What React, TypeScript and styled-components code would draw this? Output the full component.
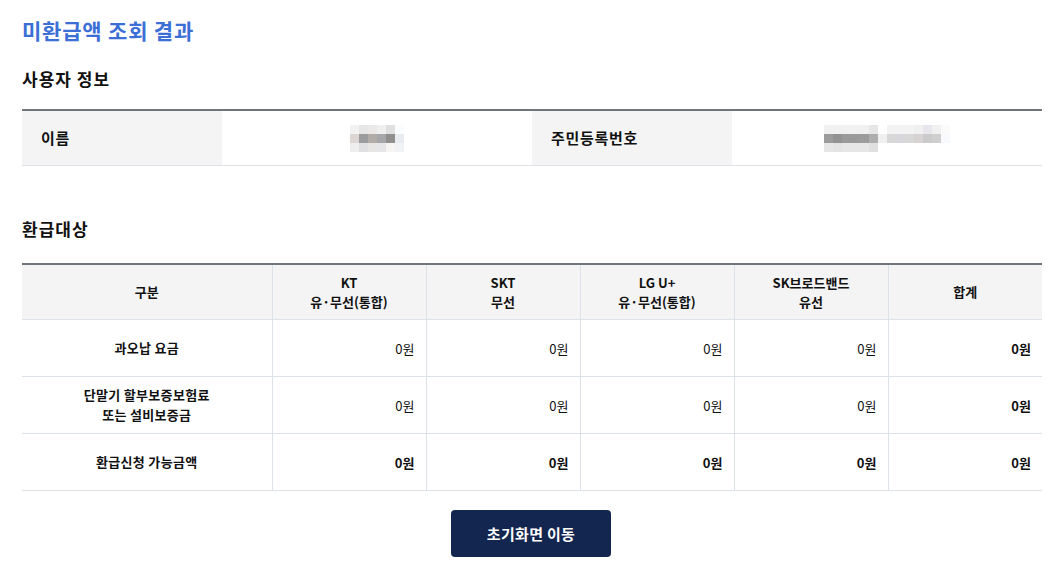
import React from "react";
import styled, { createGlobalStyle } from "styled-components";

const GlobalStyle = createGlobalStyle`
  html, body { margin: 0; padding: 0; background: #ffffff; }
  body {
    font-family: "Noto Sans CJK KR", "Noto Sans", sans-serif;
    color: #111111;
    -webkit-font-smoothing: antialiased;
  }
  * { box-sizing: border-box; }
`;

const Page = styled.div`
  width: 1060px;
  padding: 16px 18px 0 22px;
  display: flex;
  flex-direction: column;
`;

const Title = styled.h1`
  margin: 0;
  font-size: 21px;
  line-height: 28px;
  font-weight: 700;
  color: #3c6fd6;
  letter-spacing: 0.8px;
`;

const SectionTitle = styled.h2<{ $top: number }>`
  margin: ${(p) => p.$top}px 0 0;
  font-size: 17px;
  line-height: 24px;
  font-weight: 700;
  color: #111111;
  letter-spacing: 1px;
`;

const InfoTable = styled.table`
  margin-top: 18px;
  width: 1020px;
  border-collapse: collapse;
  table-layout: fixed;
  border-top: 2px solid #6f757b;
`;

const InfoRow = styled.tr`
  height: 55px;
  border-bottom: 1px solid #dde2e8;
`;

const InfoLabel = styled.th`
  background: #f4f4f4;
  text-align: left;
  padding: 0 19px;
  font-size: 15px;
  font-weight: 700;
  letter-spacing: 0.7px;
  color: #111111;
`;

const InfoValue = styled.td`
  text-align: center;
  padding: 0;
  vertical-align: middle;
`;

const RefundTable = styled.table`
  margin-top: 22px;
  width: 1020px;
  border-collapse: collapse;
  table-layout: fixed;
  border-top: 2px solid #6f757b;
  font-size: 13px;
`;

const Row = styled.tr<{ $head?: boolean }>`
  height: ${(p) => (p.$head ? 56 : 57)}px;
  border-bottom: 1px solid #dde2e8;
  background: ${(p) => (p.$head ? "#f4f4f4" : "#ffffff")};
`;

const HeadCell = styled.th`
  font-weight: 700;
  line-height: 19px;
  text-align: center;
  padding: 0 6px;
  color: #111111;
  & + & { border-left: 1px solid #dde2e8; }
`;

const LabelCell = styled.th`
  font-weight: 700;
  line-height: 20px;
  text-align: center;
  padding: 0 8px;
  letter-spacing: 0.3px;
  color: #111111;
`;

const AmountCell = styled.td<{ $bold?: boolean }>`
  text-align: right;
  padding: 0 11px;
  font-weight: ${(p) => (p.$bold ? 700 : 400)};
  border-left: 1px solid #dde2e8;
  color: #111111;
`;

const ButtonRow = styled.div`
  display: flex;
  justify-content: center;
  padding-top: 19px;
  padding-right: 2px;
`;

const HomeButton = styled.button`
  width: 160px;
  height: 47px;
  border: none;
  border-radius: 4px;
  background: #12264f;
  color: #ffffff;
  font-family: "Noto Sans CJK KR", "Noto Sans", sans-serif;
  font-size: 15px;
  font-weight: 700;
  letter-spacing: 0.3px;
  padding: 0;
  cursor: pointer;
`;

const MosaicSvg = styled.svg`
  display: inline-block;
  vertical-align: middle;
`;

const Mosaic: React.FC<{ rows: string[][]; cell?: number }> = ({ rows, cell = 9 }) => {
  const cols = Math.max(...rows.map((r) => r.length));
  return (
    <MosaicSvg width={cols * cell} height={rows.length * cell} viewBox={`0 0 ${cols * cell} ${rows.length * cell}`}>
      {rows.map((r, y) =>
        r.map((c, x) => <rect key={`${x}-${y}`} x={x * cell} y={y * cell} width={cell} height={cell} fill={c} />)
      )}
    </MosaicSvg>
  );
};

const nameMosaic = [
  ["#f2f2f2", "#e6e6e6", "#ebe9e8", "#efefef", "#e0e0e0", "#fbfcfd"],
  ["#ddd7d4", "#9a9c9d", "#b2aca9", "#a6a7ab", "#918f8e", "#e8ebf0"],
  ["#eeeeee", "#e0e0e2", "#e8e6e5", "#e6e6e8", "#f7f5f3", "#f0f2f5"],
];

const idMosaic = [
  ["#f1f1f1", "#f1f1f1", "#f1f1f1", "#f1f1f1", "#f1f1f1", "#e6e6e6", "#ffffff", "#f3f3f3", "#f3f3f3", "#f3f3f3", "#f0f0f0", "#e8e6ec", "#f0f0f0", "#fbfbfb"],
  ["#9c9c9c", "#929292", "#9a9a9a", "#9a9a9a", "#9c9c9c", "#aeaeae", "#f0f0f0", "#d8d8d8", "#d8d8dc", "#d8d8d8", "#d6d3d2", "#cbcbcb", "#cfcfcf", "#f8f9fc"],
  ["#e6e6e6", "#e3e3e3", "#e6e6e6", "#e6e6e6", "#e6e6e6", "#e0e0e0", "#ffffff", "#ffffff", "#ffffff", "#ffffff", "#ffffff", "#ffffff", "#ffffff", "#ffffff"],
];

const carriers = [
  ["KT", "유·무선(통합)"],
  ["SKT", "무선"],
  ["LG U+", "유·무선(통합)"],
  ["SK브로드밴드", "유선"],
];

const rows: { label: string[]; bold: boolean }[] = [
  { label: ["과오납 요금"], bold: false },
  { label: ["단말기 할부보증보험료", "또는 설비보증금"], bold: false },
  { label: ["환급신청 가능금액"], bold: true },
];

export default function App() {
  return (
    <>
      <GlobalStyle />
      <Page>
        <Title>미환급액 조회 결과</Title>
        <SectionTitle $top={23}>사용자 정보</SectionTitle>
        <InfoTable>
          <colgroup>
            <col style={{ width: 200 }} />
            <col style={{ width: 310 }} />
            <col style={{ width: 200 }} />
            <col style={{ width: 310 }} />
          </colgroup>
          <tbody>
            <InfoRow>
              <InfoLabel>이름</InfoLabel>
              <InfoValue>
                <Mosaic rows={nameMosaic} />
              </InfoValue>
              <InfoLabel>주민등록번호</InfoLabel>
              <InfoValue>
                <Mosaic rows={idMosaic} />
              </InfoValue>
            </InfoRow>
          </tbody>
        </InfoTable>

        <SectionTitle $top={51}>환급대상</SectionTitle>
        <RefundTable>
          <colgroup>
            <col style={{ width: 250 }} />
            <col style={{ width: 154 }} />
            <col style={{ width: 154 }} />
            <col style={{ width: 154 }} />
            <col style={{ width: 154 }} />
            <col style={{ width: 154 }} />
          </colgroup>
          <thead>
            <Row $head>
              <HeadCell>구분</HeadCell>
              {carriers.map(([a, b]) => (
                <HeadCell key={a}>
                  {a}
                  <br />
                  {b}
                </HeadCell>
              ))}
              <HeadCell>합계</HeadCell>
            </Row>
          </thead>
          <tbody>
            {rows.map((r, i) => (
              <Row key={i}>
                <LabelCell>
                  {r.label.map((l, j) => (
                    <React.Fragment key={j}>
                      {j > 0 && <br />}
                      {l}
                    </React.Fragment>
                  ))}
                </LabelCell>
                {carriers.map(([a]) => (
                  <AmountCell key={a} $bold={r.bold}>
                    0원
                  </AmountCell>
                ))}
                <AmountCell $bold>0원</AmountCell>
              </Row>
            ))}
          </tbody>
        </RefundTable>

        <ButtonRow>
          <HomeButton type="button">초기화면 이동</HomeButton>
        </ButtonRow>
      </Page>
    </>
  );
}
